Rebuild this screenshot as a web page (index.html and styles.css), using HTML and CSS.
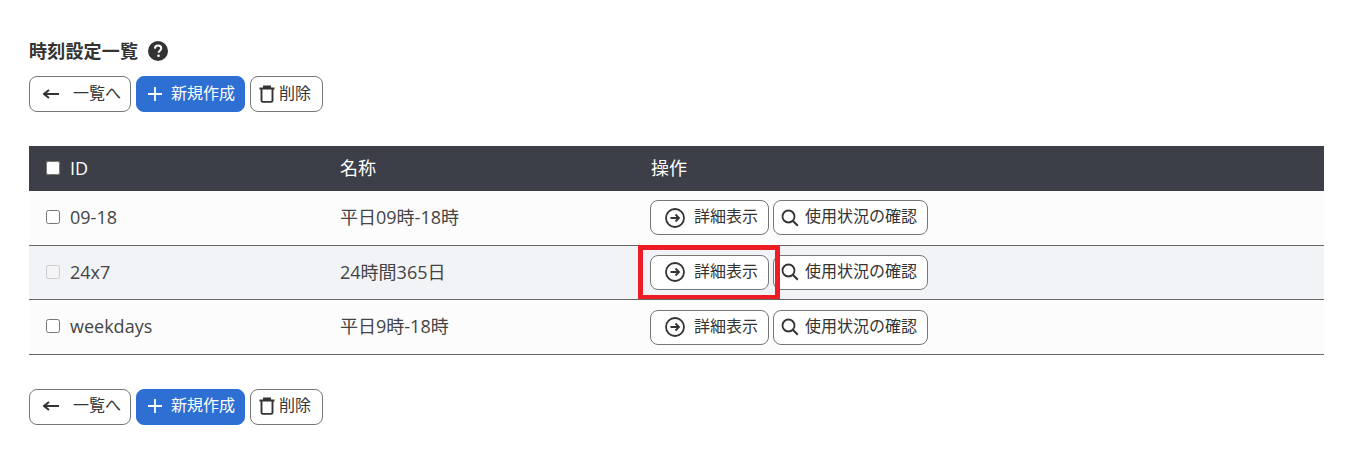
FILE: index.html
```html
<!DOCTYPE html>
<html lang="ja">
<head>
<meta charset="utf-8">
<title>時刻設定一覧</title>
<link rel="stylesheet" href="styles.css">
</head>
<body>
<main class="page">
  <h1 class="title">時刻設定一覧
    <svg class="help" viewBox="0 0 20 20" width="20" height="20"><circle cx="10" cy="10" r="10" fill="#333"/><path d="M6.900 7.600c.1-1.900 1.400-3 3.200-3 1.800 0 3.100 1.100 3.100 2.700 0 2.400-2.600 2.300-2.600 4.500" fill="none" stroke="#fff" stroke-width="2"/><circle cx="10.500" cy="14.800" r="1.300" fill="#fff"/></svg>
  </h1>
  <div class="toolbar">
    <button class="btn back"><svg width="18" height="14" viewBox="0 0 18 14"><path d="M17 7H2M7 3 2 7l5 4" fill="none" stroke="#333" stroke-width="2"/></svg><span>一覧へ</span></button>
    <button class="btn primary"><svg width="16" height="16" viewBox="0 0 16 16"><path d="M8 1v14M1 8h14" stroke="#fff" stroke-width="1.800" fill="none"/></svg><span>新規作成</span></button>
    <button class="btn trash"><svg width="16" height="18" viewBox="0 0 16 18"><path d="M0.500 3.500h15M5 3.500V1.500h6v2M2.500 3.500v12c0 .8.500 1.400 1.300 1.400h8.400c.8 0 1.300-.6 1.300-1.400v-12" fill="none" stroke="#333" stroke-width="1.900"/></svg><span>削除</span></button>
  </div>
  <table class="list">
    <thead>
      <tr><th class="c1"><label class="cell-id"><input type="checkbox" class="check head">ID</label></th><th class="c2">名称</th><th>操作</th></tr>
    </thead>
    <tbody>
      <tr class="first"><td><label class="cell-id"><input type="checkbox" class="check">09-18</label></td><td>平日09時-18時</td><td class="op-cell"><div class="ops">
        <button class="btn detail"><svg width="20" height="20" viewBox="0 0 20 20"><circle cx="10" cy="10" r="9" fill="none" stroke="#333" stroke-width="1.800"/><path d="M5.500 10h8.500M10.500 6.500 14 10l-3.500 3.500" fill="none" stroke="#333" stroke-width="1.800"/></svg><span>詳細表示</span></button>
        <button class="btn usage"><svg width="18" height="18" viewBox="0 0 18 18"><circle cx="7.500" cy="7.500" r="6" fill="none" stroke="#333" stroke-width="1.800"/><path d="m11.800 11.800 5 5" stroke="#333" stroke-width="2" fill="none"/></svg><span>使用状況の確認</span></button>
      </div></td></tr>
      <tr class="alt"><td><label class="cell-id"><input type="checkbox" class="check" disabled>24x7</label></td><td>24時間365日</td><td class="op-cell"><div class="ops">
        <button class="btn detail"><svg width="20" height="20" viewBox="0 0 20 20"><circle cx="10" cy="10" r="9" fill="none" stroke="#333" stroke-width="1.800"/><path d="M5.500 10h8.500M10.500 6.500 14 10l-3.500 3.500" fill="none" stroke="#333" stroke-width="1.800"/></svg><span>詳細表示</span></button>
        <button class="btn usage"><svg width="18" height="18" viewBox="0 0 18 18"><circle cx="7.500" cy="7.500" r="6" fill="none" stroke="#333" stroke-width="1.800"/><path d="m11.800 11.800 5 5" stroke="#333" stroke-width="2" fill="none"/></svg><span>使用状況の確認</span></button>
        <div class="marker"></div>
      </div></td></tr>
      <tr class="last"><td><label class="cell-id"><input type="checkbox" class="check">weekdays</label></td><td>平日9時-18時</td><td class="op-cell"><div class="ops">
        <button class="btn detail"><svg width="20" height="20" viewBox="0 0 20 20"><circle cx="10" cy="10" r="9" fill="none" stroke="#333" stroke-width="1.800"/><path d="M5.500 10h8.500M10.500 6.500 14 10l-3.500 3.500" fill="none" stroke="#333" stroke-width="1.800"/></svg><span>詳細表示</span></button>
        <button class="btn usage"><svg width="18" height="18" viewBox="0 0 18 18"><circle cx="7.500" cy="7.500" r="6" fill="none" stroke="#333" stroke-width="1.800"/><path d="m11.800 11.800 5 5" stroke="#333" stroke-width="2" fill="none"/></svg><span>使用状況の確認</span></button>
      </div></td></tr>
    </tbody>
  </table>
  <div class="toolbar">
    <button class="btn back"><svg width="18" height="14" viewBox="0 0 18 14"><path d="M17 7H2M7 3 2 7l5 4" fill="none" stroke="#333" stroke-width="2"/></svg><span>一覧へ</span></button>
    <button class="btn primary"><svg width="16" height="16" viewBox="0 0 16 16"><path d="M8 1v14M1 8h14" stroke="#fff" stroke-width="1.800" fill="none"/></svg><span>新規作成</span></button>
    <button class="btn trash"><svg width="16" height="18" viewBox="0 0 16 18"><path d="M0.500 3.500h15M5 3.500V1.500h6v2M2.500 3.500v12c0 .8.500 1.400 1.300 1.400h8.400c.8 0 1.300-.6 1.300-1.400v-12" fill="none" stroke="#333" stroke-width="1.900"/></svg><span>削除</span></button>
  </div>
</main>
</body>
</html>
```
FILE: styles.css
```css
* { box-sizing: border-box; }
html, body { margin: 0; background: #fff; }
body {
  font-family: "Open Sans", "Noto Sans CJK JP", sans-serif;
  font-size: 16px;
  color: #333;
}
.page { padding: 40px 40px 30px 29px; }
.title {
  display: flex;
  align-items: center;
  gap: 10px;
  margin: 0 0 14px;
  height: 22px;
  font-size: 18px;
  font-weight: 700;
  line-height: 22px;
  letter-spacing: 0.2px;
  color: #333;
}
.toolbar { display: flex; gap: 5px; }
.btn {
  display: flex;
  align-items: center;
  height: 36px;
  padding: 0;
  background: #fff;
  border: 1px solid #767676;
  border-radius: 8px;
  font: inherit;
  font-size: 16px;
  line-height: 22px;
  color: #333;
  white-space: nowrap;
}
.btn span { margin-top: -3px; }
.toolbar .btn svg { margin-top: -1px; }
.back { width: 102px; padding-left: 12px; gap: 13px; }
.primary { width: 109px; padding-left: 10px; gap: 8px; background: #2d6fd2; border-color: #2d6fd2; color: #fff; }
.trash { width: 73px; padding-left: 8px; gap: 4px; }
.list {
  width: 1295px;
  margin: 34px 0;
  border-collapse: collapse;
  table-layout: fixed;
}
.c1, .c2 { width: 311px; }
.list th {
  height: 45px;
  padding: 0 0 1px;
  background: #3c3f47;
  color: #fff;
  font-size: 18px;
  line-height: 24px;
  font-weight: 400;
  text-align: left;
}
.list th.c1, .list tbody td:first-child { padding-left: 18px; }
.list td {
  height: 54px;
  padding: 0 0 1px;
  background: #fcfcfc;
  border-bottom: 1px solid #666;
  font-size: 18px;
  line-height: 24px;
  color: #444;
}
.list tr.last td { height: 55px; }
.list tr.alt td { background: #f2f3f7; }
.list td.op-cell { padding: 9px 0 0; vertical-align: top; }
.list tr.last td.op-cell { padding-top: 10px; }
.cell-id { display: flex; align-items: center; gap: 10px; }
.check { width: 14px; height: 14px; margin: 0 0 0 -1px; }
.ops { position: relative; display: flex; gap: 4px; margin-left: -1px; }
.ops .btn { height: 35px; }
.detail { width: 119px; padding-left: 14px; gap: 9px; }
.usage { width: 155px; padding-left: 7px; gap: 6px; }
.marker {
  position: absolute;
  left: -12px;
  top: -10px;
  width: 142px;
  height: 54px;
  border: 5px solid #ee1c25;
  border-bottom-width: 4px;
}
```
